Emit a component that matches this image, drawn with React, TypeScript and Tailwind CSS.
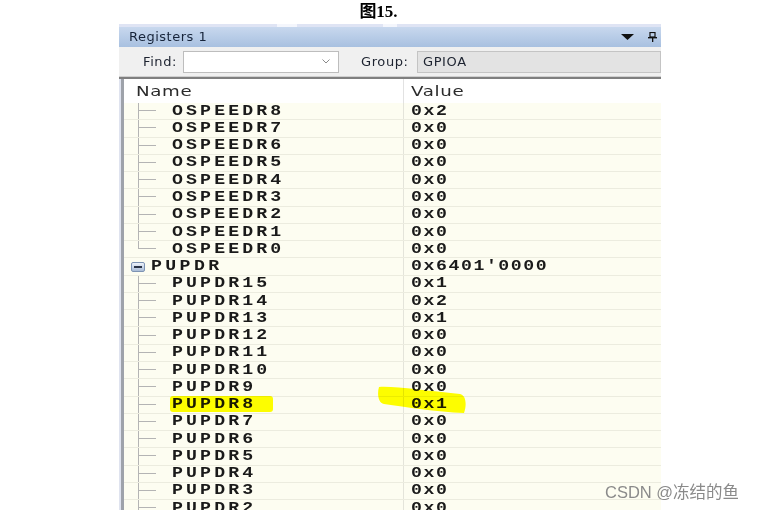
import React from "react";

type Row = {
  name: string;
  value: string;
  kind: "child" | "last" | "root";
};

const rows: Row[] = [
  { name: "OSPEEDR8", value: "0x2", kind: "child" },
  { name: "OSPEEDR7", value: "0x0", kind: "child" },
  { name: "OSPEEDR6", value: "0x0", kind: "child" },
  { name: "OSPEEDR5", value: "0x0", kind: "child" },
  { name: "OSPEEDR4", value: "0x0", kind: "child" },
  { name: "OSPEEDR3", value: "0x0", kind: "child" },
  { name: "OSPEEDR2", value: "0x0", kind: "child" },
  { name: "OSPEEDR1", value: "0x0", kind: "child" },
  { name: "OSPEEDR0", value: "0x0", kind: "last" },
  { name: "PUPDR", value: "0x6401'0000", kind: "root" },
  { name: "PUPDR15", value: "0x1", kind: "child" },
  { name: "PUPDR14", value: "0x2", kind: "child" },
  { name: "PUPDR13", value: "0x1", kind: "child" },
  { name: "PUPDR12", value: "0x0", kind: "child" },
  { name: "PUPDR11", value: "0x0", kind: "child" },
  { name: "PUPDR10", value: "0x0", kind: "child" },
  { name: "PUPDR9", value: "0x0", kind: "child" },
  { name: "PUPDR8", value: "0x1", kind: "child" },
  { name: "PUPDR7", value: "0x0", kind: "child" },
  { name: "PUPDR6", value: "0x0", kind: "child" },
  { name: "PUPDR5", value: "0x0", kind: "child" },
  { name: "PUPDR4", value: "0x0", kind: "child" },
  { name: "PUPDR3", value: "0x0", kind: "child" },
  { name: "PUPDR2", value: "0x0", kind: "child" },
];

const mono = "font-['Liberation_Mono',monospace] font-bold text-[14px] text-[#1a1a1a]";
const ui = "font-['DejaVu_Sans',sans-serif] text-[13px] tracking-[0.6px] text-[#1d2330]";

const Connector = ({ last }: { last: boolean }) => (
  <div className="flex h-full w-[18px] flex-col">
    <div className="h-1/2 border-b border-l border-[#b4b4b4]" />
    <div className={last ? "h-1/2" : "h-1/2 border-l border-[#b4b4b4]"} />
  </div>
);

const MinusBox = () => (
  <div className="flex h-[10px] w-[14px] items-center justify-center rounded-[2px] border border-[#7d93b3] bg-linear-to-b from-[#eef3fa] to-[#a9bcd6]">
    <div className="h-[2px] w-[8px] bg-[#2a3446]" />
  </div>
);

const TreeRow = ({ row }: { row: Row }) => (
  <div className="flex h-[17.27px] shrink-0 border-b border-[#ececdf] bg-[#fdfdf1]">
    <div className="flex w-[279px] items-center">
      {row.kind === "root" ? (
        <>
          <div className="ml-[7px]">
            <MinusBox />
          </div>
          <span className={`ml-[6px] inline-block origin-left scale-x-[1.3] tracking-[2.6px] ${mono}`}>
            {row.name}
          </span>
        </>
      ) : (
        <>
          <div className="ml-[14px] h-full">
            <Connector last={row.kind === "last"} />
          </div>
          <span className={`ml-[16px] inline-block origin-left scale-x-[1.3] tracking-[2.4px] ${mono}`}>
            {row.name}
          </span>
        </>
      )}
    </div>
    <div className="flex flex-1 items-center border-l border-[#e4e4da] pl-[7px]">
      <span className={`inline-block origin-left scale-x-[1.3] tracking-[1.2px] ${mono}`}>
        {row.value}
      </span>
    </div>
  </div>
);

export default function App() {
  return (
    <div className="relative h-[510px] w-[757px] overflow-hidden bg-white">
      <div className="flex h-[24px] items-center justify-center">
        <span className="font-['Liberation_Serif','Noto_Sans_CJK_SC',serif] text-[17px] font-bold text-black">
          图15.
        </span>
      </div>

      <div className="ml-[119px] flex w-[542px] flex-col">
        <div className="flex h-[3px] bg-[#dfe4f4]">
          <div className="ml-[158px] w-[20px] bg-[#f4f6fc]" />
          <div className="ml-[86px] w-[14px] bg-[#f4f6fc]" />
        </div>

        <div className="flex h-[20px] items-center bg-linear-to-b from-[#c8d8ee] to-[#a8c0e0] pl-[10px] pr-[4px]">
          <span className="font-['DejaVu_Sans',sans-serif] text-[13px] tracking-[0.5px] text-[#17243a]">
            Registers 1
          </span>
          <div className="ml-auto flex items-center gap-[14px]">
            <svg width="13" height="7" viewBox="0 0 13 7">
              <polygon points="0,0 13,0 6.5,6" fill="#111" />
            </svg>
            <svg width="9" height="10" viewBox="0 0 9 10">
              <rect x="2" y="0.5" width="5" height="4.5" fill="none" stroke="#111" strokeWidth="1.2" />
              <rect x="0" y="5" width="9" height="1.4" fill="#111" />
              <rect x="4" y="6" width="1.3" height="4" fill="#111" />
            </svg>
          </div>
        </div>

        <div className="flex h-[29px] items-center bg-[#f0f0f0] pl-[24px]">
          <span className={`w-[40px] ${ui}`}>Find:</span>
          <div className="flex h-[22px] w-[156px] items-center justify-end border border-[#bdbdbd] bg-white pr-[8px]">
            <svg width="8" height="5" viewBox="0 0 8 5">
              <polyline points="0.5,0.5 4,4 7.5,0.5" fill="none" stroke="#8a8a8a" strokeWidth="1" />
            </svg>
          </div>
          <span className={`ml-[22px] w-[56px] ${ui}`}>Group:</span>
          <div className="flex h-[22px] flex-1 items-center border border-[#c4c4c4] bg-[#e3e3e3] pl-[5px]">
            <span className={ui}>GPIOA</span>
          </div>
        </div>

        <div className="h-[1px] bg-[#cfcfcf]" />
        <div className="h-[2px] bg-[#7f7f7f]" />

        <div className="flex">
          <div className="w-[2px] bg-[#dfe3ef]" />
          <div className="w-[3px] bg-[#9ea2aa]" />
          <div className="flex flex-1 flex-col">
            <div className="flex h-[24px] bg-white">
              <div className="flex w-[279px] items-center pl-[12px]">
                <span className="inline-block origin-left scale-x-[1.3] font-['DejaVu_Sans',sans-serif] text-[14px] tracking-[0.5px] text-[#2b2b2b]">
                  Name
                </span>
              </div>
              <div className="flex flex-1 items-center border-l border-[#e2e2e2] pl-[7px]">
                <span className="inline-block origin-left scale-x-[1.3] font-['DejaVu_Sans',sans-serif] text-[14px] tracking-[0.5px] text-[#2b2b2b]">
                  Value
                </span>
              </div>
            </div>
            {rows.map((row) => (
              <TreeRow key={row.name} row={row} />
            ))}
          </div>
        </div>
      </div>

      <div className="pointer-events-none absolute left-[170px] top-[396px] h-[16px] w-[103px] rounded-[3px] bg-[#ffff00] mix-blend-multiply" />
      <svg
        className="pointer-events-none absolute left-[376px] top-[385px] mix-blend-multiply"
        width="92"
        height="30"
        viewBox="0 0 92 30"
      >
        <path
          d="M3 2 C 20 1, 50 6, 84 9 C 90 10, 91 20, 88 28 C 60 27, 30 22, 8 19 C 2 18, 1 8, 3 2 Z"
          fill="#ffff00"
        />
      </svg>

      <div className="absolute left-[605px] top-[480px] font-['Liberation_Sans','Noto_Sans_CJK_SC',sans-serif] text-[16.5px] text-[#8a8a8a]">
        CSDN @冻结的鱼
      </div>
    </div>
  );
}
